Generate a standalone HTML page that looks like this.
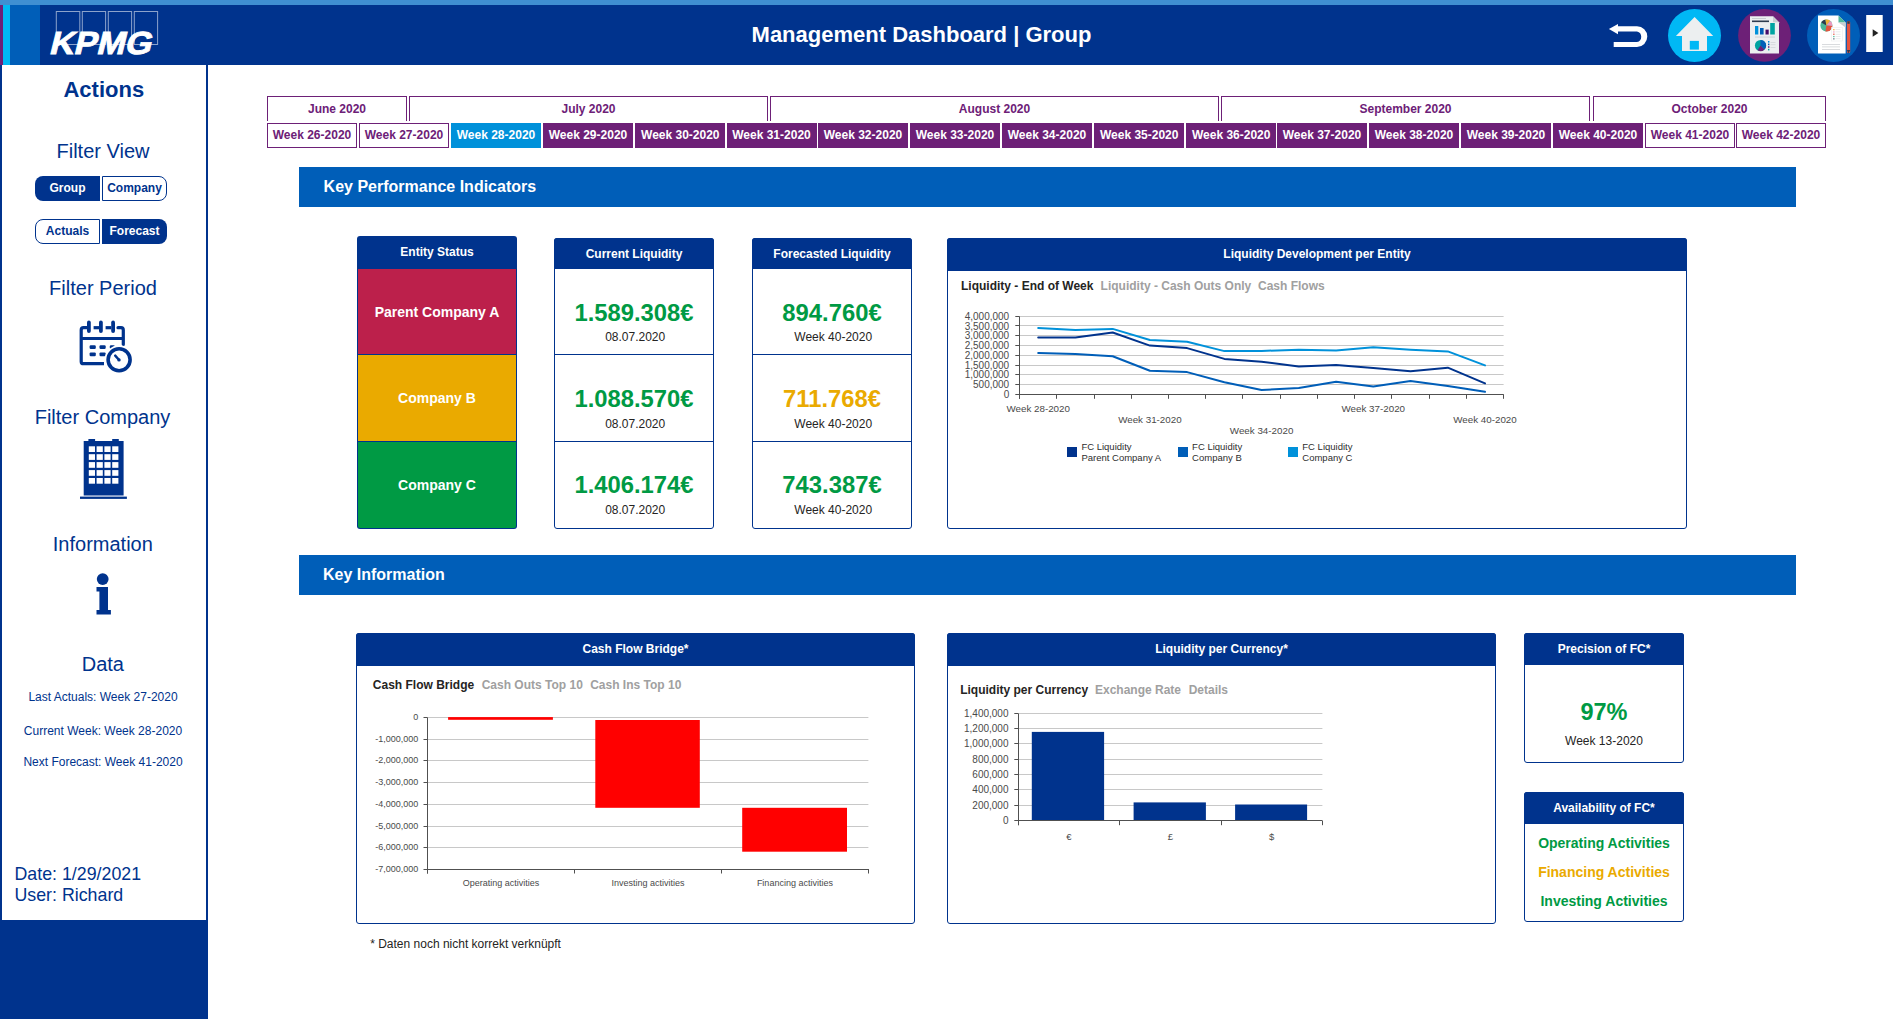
<!DOCTYPE html>
<html><head><meta charset="utf-8"><title>Management Dashboard | Group</title>
<style>
html,body{margin:0;padding:0;}
body{width:1893px;height:1019px;overflow:hidden;position:relative;background:#fff;font-family:"Liberation Sans", sans-serif;}
.a{position:absolute;}
.t{position:absolute;white-space:nowrap;}
svg{position:absolute;}
</style></head><body>
<div class="a" style="left:0px;top:0px;width:1893px;height:5px;background:#3F8FD2;"></div>
<div class="a" style="left:0px;top:5px;width:1893px;height:60px;background:#00338D;"></div>
<div class="a" style="left:0px;top:5px;width:3px;height:60px;background:#6D2077;"></div>
<div class="a" style="left:3px;top:5px;width:7px;height:60px;background:#00B8F5;"></div>
<div class="a" style="left:10px;top:5px;width:30px;height:60px;background:#005EB8;"></div>
<svg style="left:40px;top:5px" width="130" height="60" viewBox="40 5 130 60"><g fill="none" stroke="rgba(255,255,255,0.55)" stroke-width="1"><rect x="56.3" y="11.5" width="23.5" height="33"/><rect x="82.3" y="11.5" width="23.3" height="33"/><rect x="108.3" y="11.5" width="23.3" height="33"/><rect x="134.3" y="11.5" width="23.3" height="33"/></g><g transform="translate(0 54.4) skewX(-14) translate(0 -54.4)"><text x="48.5" y="54.4" font-family='"Liberation Sans", sans-serif' font-weight="bold" font-size="32" fill="#fff" stroke="#fff" stroke-width="0.9" textLength="102" lengthAdjust="spacingAndGlyphs">KPMG</text></g></svg>
<div class="t" style="top:23.68px;font-size:22px;line-height:22px;color:#fff;font-weight:bold;left:521.5px;width:800px;text-align:center;">Management Dashboard | Group</div>
<svg style="left:1600px;top:5px" width="293" height="60" viewBox="1600 5 293 60"><path d="M1618 26.3 H1637 A10.3 10.3 0 0 1 1637 46.9 H1613.7 V42.1 H1637 A5.5 5.5 0 0 0 1637 31.4 H1618 Z" fill="#fff"/><path d="M1608.9 29 L1618 23.9 L1618 34.2 Z" fill="#fff"/><circle cx="1694.5" cy="35.4" r="26.5" fill="#00B8F5"/><path d="M1694.6 17 L1713.2 35.9 L1707 35.9 L1707 50.9 L1682 50.9 L1682 35.9 L1675.9 35.9 Z" fill="#ECEFF0"/><rect x="1689.8" y="40.9" width="9.1" height="8.7" fill="#00B8F5"/><circle cx="1764.5" cy="35.4" r="26.4" fill="#6D2077"/><path d="M1750 16.3 H1773 L1779 22.3 V53.4 H1750 Z" fill="#ECEEF0"/><path d="M1773 16.3 L1779 22.3 H1773 Z" fill="#C9CDD1"/><rect x="1752" y="20.5" width="17" height="1.6" fill="#2E3B4E"/><rect x="1752" y="18" width="14" height="1" fill="#C9CDD1"/><rect x="1755" y="26" width="3.3" height="8.5" fill="#0091DA"/><rect x="1760" y="28" width="3.6" height="6.5" fill="#005EB8"/><rect x="1765.5" y="29.6" width="3.2" height="4.9" fill="#470A68"/><rect x="1770.2" y="23" width="4.6" height="11.5" fill="#00A3A1"/><rect x="1755" y="36.6" width="20" height="0.9" fill="#C9CDD1"/><circle cx="1760.5" cy="45.5" r="5.6" fill="#00A3A1"/><path d="M1760.5 45.5 V39.9 A5.6 5.6 0 0 1 1764.5 49.4 Z" fill="#005EB8"/><path d="M1760.5 45.5 L1764.5 49.4 A5.6 5.6 0 0 1 1757.5 50.2 Z" fill="#6D2077"/><rect x="1768" y="41" width="1.4" height="1.6" fill="#0091DA"/><rect x="1768" y="43.6" width="1.4" height="1.6" fill="#005EB8"/><rect x="1768" y="46.2" width="1.4" height="1.6" fill="#6D2077"/><rect x="1768" y="48.8" width="1.4" height="1.6" fill="#00A3A1"/><rect x="1770.5" y="42" width="5" height="0.6" fill="#C9CDD1"/><rect x="1770.5" y="44.5" width="5" height="0.6" fill="#C9CDD1"/><rect x="1770.5" y="47" width="5" height="0.6" fill="#C9CDD1"/><circle cx="1833.5" cy="35.4" r="26.5" fill="#005EB8"/><path d="M1818 15.4 H1838.5 L1845.6 22.5 V53.4 H1818 Z" fill="#fff"/><path d="M1838.5 15.4 L1845.6 22.5 H1838.5 Z" fill="#4DB89A"/><path d="M1838.5 22.5 H1845.6 V27.5 Z" fill="#C9CDD1"/><circle cx="1826.4" cy="25.5" r="6" fill="#4DB89A"/><path d="M1826.4 25.5 L1821.2 22.5 A6 6 0 0 1 1825.4 19.6 Z" fill="#2E3B4E"/><path d="M1826.4 25.5 L1825.4 19.6 A6 6 0 0 1 1830.2 20.8 Z" fill="#F2B134"/><path d="M1826.4 25.5 L1830.2 20.8 A6 6 0 0 1 1832.4 25.9 Z" fill="#E99AC1"/><path d="M1826.4 25.5 L1832.4 25.9 A6 6 0 0 1 1825.4 31.4 Z" fill="#E5533F"/><rect x="1831.5" y="27.5" width="11" height="13.5" fill="#fff" stroke="#E6E8EA" stroke-width="0.5"/><rect x="1833.2" y="29" width="1.3" height="1.3" fill="#F2B134"/><rect x="1833.2" y="31.3" width="1.3" height="1.3" fill="#E99AC1"/><rect x="1833.2" y="33.6" width="1.3" height="1.3" fill="#E5533F"/><rect x="1833.2" y="35.9" width="1.3" height="1.3" fill="#4DB89A"/><rect x="1833.2" y="38.2" width="1.3" height="1.3" fill="#5A6B7E"/><g fill="#DADDE0"><rect x="1835.5" y="29.3" width="5" height="0.6"/><rect x="1835.5" y="31.6" width="5" height="0.6"/><rect x="1835.5" y="33.9" width="5" height="0.6"/><rect x="1835.5" y="36.2" width="5" height="0.6"/><rect x="1835.5" y="38.5" width="5" height="0.6"/></g><rect x="1822" y="44" width="18" height="0.8" fill="#D0D3D6"/><rect x="1822" y="46.5" width="18" height="0.8" fill="#D0D3D6"/><rect x="1822" y="49" width="18" height="0.8" fill="#D0D3D6"/><rect x="1846.9" y="21.3" width="3.3" height="31.7" rx="1.3" fill="#E5533F"/><rect x="1847.4" y="21.3" width="2.3" height="2.5" fill="#2E3B4E"/><path d="M1846.9 50 H1850.2 L1848.55 53.5 Z" fill="#2E3B4E"/><rect x="1866.2" y="15" width="16.5" height="37" fill="#fff"/><path d="M1872.7 29.2 L1878.4 33 L1872.7 36.7 Z" fill="#222"/></svg>
<div class="a" style="left:0px;top:65px;width:2px;height:954px;background:#00338D;"></div>
<div class="a" style="left:206px;top:65px;width:2px;height:954px;background:#00338D;"></div>
<div class="a" style="left:0px;top:920px;width:208px;height:99px;background:#00338D;"></div>
<div class="t" style="top:78.98px;font-size:22px;line-height:22px;color:#00338D;font-weight:bold;left:-296.2px;width:800px;text-align:center;">Actions</div>
<div class="t" style="top:141.07px;font-size:20px;line-height:20px;color:#00338D;left:-297px;width:800px;text-align:center;">Filter View</div>
<div class="a" style="left:35px;top:176px;width:65px;height:25px;background:#00338D;border-radius:8px 0 0 8px;"></div>
<div class="a" style="left:102px;top:176px;width:65px;height:25px;border:1px solid #00338D;box-sizing:border-box;border-radius:0 8px 8px 0;"></div>
<div class="t" style="top:181.84px;font-size:12px;line-height:12px;color:#fff;font-weight:bold;left:-332.5px;width:800px;text-align:center;">Group</div>
<div class="t" style="top:181.84px;font-size:12px;line-height:12px;color:#00338D;font-weight:bold;left:-265.5px;width:800px;text-align:center;">Company</div>
<div class="a" style="left:35px;top:219px;width:65px;height:25px;border:1px solid #00338D;box-sizing:border-box;border-radius:8px 0 0 8px;"></div>
<div class="a" style="left:102px;top:219px;width:65px;height:25px;background:#00338D;border-radius:0 8px 8px 0;"></div>
<div class="t" style="top:224.64px;font-size:12px;line-height:12px;color:#00338D;font-weight:bold;left:-332.5px;width:800px;text-align:center;">Actuals</div>
<div class="t" style="top:224.64px;font-size:12px;line-height:12px;color:#fff;font-weight:bold;left:-265.5px;width:800px;text-align:center;">Forecast</div>
<div class="t" style="top:278.07px;font-size:20px;line-height:20px;color:#00338D;left:-297px;width:800px;text-align:center;">Filter Period</div>
<svg style="left:70px;top:310px" width="70" height="70" viewBox="70 310 70 70"><g fill="none" stroke="#00338D" stroke-width="3.2" stroke-linecap="round" stroke-linejoin="round"><path d="M104 363.7 H83.5 A2.3 2.3 0 0 1 81.2 361.4 V330 A2.3 2.3 0 0 1 83.5 327.7 H87" stroke-linecap="butt"/><path d="M93.6 327.7 H99" stroke-linecap="butt"/><path d="M105.6 327.7 H111.2" stroke-linecap="butt"/><path d="M118 327.7 H121 A2.3 2.3 0 0 1 123.3 330 V344.5"/><path d="M82 338.5 H122.5"/></g><g stroke="#00338D" stroke-width="3.8" stroke-linecap="round"><path d="M88.9 322.5 V331"/><path d="M100.9 322.5 V331"/><path d="M113.1 322.5 V331"/></g><g fill="#00338D"><rect x="89.6" y="345.2" width="6.2" height="3.8" rx="1.2"/><rect x="99.5" y="345.2" width="6.2" height="3.8" rx="1.2"/><rect x="109.8" y="345.2" width="5" height="3.8" rx="1.2"/><rect x="89.6" y="352.4" width="6.2" height="3.8" rx="1.2"/><rect x="99.5" y="352.4" width="6.2" height="3.8" rx="1.2"/></g><circle cx="119.1" cy="359.8" r="14.5" fill="#fff"/><circle cx="119.1" cy="359.8" r="11" fill="#fff" stroke="#00338D" stroke-width="3.6"/><path d="M115.2 355.6 L118.9 359.8" stroke="#00338D" stroke-width="2.4" stroke-linecap="round"/><circle cx="119" cy="359.9" r="1.7" fill="#00338D"/></svg>
<div class="t" style="top:407.07px;font-size:20px;line-height:20px;color:#00338D;left:-297.5px;width:800px;text-align:center;">Filter Company</div>
<svg style="left:70px;top:430px" width="70" height="80" viewBox="70 430 70 80"><g fill="#00338D"><rect x="83.7" y="441" width="39.9" height="54.5"/><rect x="88.4" y="439" width="6.7" height="3"/><rect x="112.2" y="439" width="6.6" height="3"/><rect x="80" y="496.6" width="46.9" height="2.3"/></g><g fill="#fff"><rect x="88.8" y="446.3" width="6.2" height="5.7"/><rect x="96.6" y="446.3" width="6.2" height="5.7"/><rect x="104.4" y="446.3" width="6.2" height="5.7"/><rect x="112.2" y="446.3" width="6.2" height="5.7"/><rect x="88.8" y="454.2" width="6.2" height="5.7"/><rect x="96.6" y="454.2" width="6.2" height="5.7"/><rect x="104.4" y="454.2" width="6.2" height="5.7"/><rect x="112.2" y="454.2" width="6.2" height="5.7"/><rect x="88.8" y="462.1" width="6.2" height="5.7"/><rect x="96.6" y="462.1" width="6.2" height="5.7"/><rect x="104.4" y="462.1" width="6.2" height="5.7"/><rect x="112.2" y="462.1" width="6.2" height="5.7"/><rect x="88.8" y="470.1" width="6.2" height="5.7"/><rect x="96.6" y="470.1" width="6.2" height="5.7"/><rect x="104.4" y="470.1" width="6.2" height="5.7"/><rect x="112.2" y="470.1" width="6.2" height="5.7"/><rect x="88.8" y="478.0" width="6.2" height="5.7"/><rect x="96.6" y="478.0" width="6.2" height="5.7"/><rect x="104.4" y="478.0" width="6.2" height="5.7"/><rect x="112.2" y="478.0" width="6.2" height="5.7"/></g></svg>
<div class="t" style="top:534.17px;font-size:20px;line-height:20px;color:#00338D;left:-297.2px;width:800px;text-align:center;">Information</div>
<svg style="left:85px;top:565px" width="40" height="60" viewBox="85 565 40 60"><g fill="#00338D"><circle cx="102.7" cy="579.1" r="5.9"/><path d="M96.5 587.1 H108 V610 H110.9 V614.5 H96.5 V610 H99.4 V591.6 H96.5 Z"/></g></svg>
<div class="t" style="top:653.77px;font-size:20px;line-height:20px;color:#00338D;left:-297.2px;width:800px;text-align:center;">Data</div>
<div class="t" style="top:690.84px;font-size:12px;line-height:12px;color:#00338D;left:-297px;width:800px;text-align:center;">Last Actuals: Week 27-2020</div>
<div class="t" style="top:724.74px;font-size:12px;line-height:12px;color:#00338D;left:-297px;width:800px;text-align:center;">Current Week: Week 28-2020</div>
<div class="t" style="top:755.74px;font-size:12px;line-height:12px;color:#00338D;left:-297px;width:800px;text-align:center;">Next Forecast: Week 41-2020</div>
<div class="t" style="top:865.93px;font-size:17.8px;line-height:17.8px;color:#00338D;left:14.5px;">Date: 1/29/2021</div>
<div class="t" style="top:886.73px;font-size:17.8px;line-height:17.8px;color:#00338D;left:14.5px;">User: Richard</div>
<div class="a" style="left:267px;top:96px;width:140px;height:25px;border:1px solid #6D2077;border-bottom:none;box-sizing:border-box;"></div>
<div class="t" style="top:103.04px;font-size:12px;line-height:12px;color:#6D2077;font-weight:bold;left:-63.0px;width:800px;text-align:center;">June 2020</div>
<div class="a" style="left:409px;top:96px;width:359px;height:25px;border:1px solid #6D2077;border-bottom:none;box-sizing:border-box;"></div>
<div class="t" style="top:103.04px;font-size:12px;line-height:12px;color:#6D2077;font-weight:bold;left:188.5px;width:800px;text-align:center;">July 2020</div>
<div class="a" style="left:770px;top:96px;width:449px;height:25px;border:1px solid #6D2077;border-bottom:none;box-sizing:border-box;"></div>
<div class="t" style="top:103.04px;font-size:12px;line-height:12px;color:#6D2077;font-weight:bold;left:594.5px;width:800px;text-align:center;">August 2020</div>
<div class="a" style="left:1221px;top:96px;width:369px;height:25px;border:1px solid #6D2077;border-bottom:none;box-sizing:border-box;"></div>
<div class="t" style="top:103.04px;font-size:12px;line-height:12px;color:#6D2077;font-weight:bold;left:1005.5px;width:800px;text-align:center;">September 2020</div>
<div class="a" style="left:1593px;top:96px;width:233px;height:25px;border:1px solid #6D2077;border-bottom:none;box-sizing:border-box;"></div>
<div class="t" style="top:103.04px;font-size:12px;line-height:12px;color:#6D2077;font-weight:bold;left:1309.5px;width:800px;text-align:center;">October 2020</div>
<div class="a" style="left:267px;top:123px;width:90px;height:25px;border:1px solid #6D2077;box-sizing:border-box;"></div>
<div class="t" style="top:128.84px;font-size:12px;line-height:12px;color:#6D2077;font-weight:bold;left:-88.0px;width:800px;text-align:center;">Week 26-2020</div>
<div class="a" style="left:359px;top:123px;width:90px;height:25px;border:1px solid #6D2077;box-sizing:border-box;"></div>
<div class="t" style="top:128.84px;font-size:12px;line-height:12px;color:#6D2077;font-weight:bold;left:4.0px;width:800px;text-align:center;">Week 27-2020</div>
<div class="a" style="left:451px;top:123px;width:90px;height:25px;background:#0091DA;"></div>
<div class="t" style="top:128.84px;font-size:12px;line-height:12px;color:#fff;font-weight:bold;left:96.0px;width:800px;text-align:center;">Week 28-2020</div>
<div class="a" style="left:543px;top:123px;width:90px;height:25px;background:#6D2077;"></div>
<div class="t" style="top:128.84px;font-size:12px;line-height:12px;color:#fff;font-weight:bold;left:188.0px;width:800px;text-align:center;">Week 29-2020</div>
<div class="a" style="left:635.3px;top:123px;width:90px;height:25px;background:#6D2077;"></div>
<div class="t" style="top:128.84px;font-size:12px;line-height:12px;color:#fff;font-weight:bold;left:280.29999999999995px;width:800px;text-align:center;">Week 30-2020</div>
<div class="a" style="left:726.5px;top:123px;width:90px;height:25px;background:#6D2077;"></div>
<div class="t" style="top:128.84px;font-size:12px;line-height:12px;color:#fff;font-weight:bold;left:371.5px;width:800px;text-align:center;">Week 31-2020</div>
<div class="a" style="left:818px;top:123px;width:90px;height:25px;background:#6D2077;"></div>
<div class="t" style="top:128.84px;font-size:12px;line-height:12px;color:#fff;font-weight:bold;left:463.0px;width:800px;text-align:center;">Week 32-2020</div>
<div class="a" style="left:910px;top:123px;width:90px;height:25px;background:#6D2077;"></div>
<div class="t" style="top:128.84px;font-size:12px;line-height:12px;color:#fff;font-weight:bold;left:555.0px;width:800px;text-align:center;">Week 33-2020</div>
<div class="a" style="left:1002px;top:123px;width:90px;height:25px;background:#6D2077;"></div>
<div class="t" style="top:128.84px;font-size:12px;line-height:12px;color:#fff;font-weight:bold;left:647.0px;width:800px;text-align:center;">Week 34-2020</div>
<div class="a" style="left:1094.2px;top:123px;width:90px;height:25px;background:#6D2077;"></div>
<div class="t" style="top:128.84px;font-size:12px;line-height:12px;color:#fff;font-weight:bold;left:739.2px;width:800px;text-align:center;">Week 35-2020</div>
<div class="a" style="left:1186.2px;top:123px;width:90px;height:25px;background:#6D2077;"></div>
<div class="t" style="top:128.84px;font-size:12px;line-height:12px;color:#fff;font-weight:bold;left:831.2px;width:800px;text-align:center;">Week 36-2020</div>
<div class="a" style="left:1277px;top:123px;width:90px;height:25px;background:#6D2077;"></div>
<div class="t" style="top:128.84px;font-size:12px;line-height:12px;color:#fff;font-weight:bold;left:922.0px;width:800px;text-align:center;">Week 37-2020</div>
<div class="a" style="left:1369px;top:123px;width:90px;height:25px;background:#6D2077;"></div>
<div class="t" style="top:128.84px;font-size:12px;line-height:12px;color:#fff;font-weight:bold;left:1014.0px;width:800px;text-align:center;">Week 38-2020</div>
<div class="a" style="left:1461px;top:123px;width:90px;height:25px;background:#6D2077;"></div>
<div class="t" style="top:128.84px;font-size:12px;line-height:12px;color:#fff;font-weight:bold;left:1106.0px;width:800px;text-align:center;">Week 39-2020</div>
<div class="a" style="left:1553px;top:123px;width:90px;height:25px;background:#6D2077;"></div>
<div class="t" style="top:128.84px;font-size:12px;line-height:12px;color:#fff;font-weight:bold;left:1198.0px;width:800px;text-align:center;">Week 40-2020</div>
<div class="a" style="left:1645px;top:123px;width:90px;height:25px;border:1px solid #6D2077;box-sizing:border-box;"></div>
<div class="t" style="top:128.84px;font-size:12px;line-height:12px;color:#6D2077;font-weight:bold;left:1290.0px;width:800px;text-align:center;">Week 41-2020</div>
<div class="a" style="left:1736px;top:123px;width:90px;height:25px;border:1px solid #6D2077;box-sizing:border-box;"></div>
<div class="t" style="top:128.84px;font-size:12px;line-height:12px;color:#6D2077;font-weight:bold;left:1381.0px;width:800px;text-align:center;">Week 42-2020</div>
<div class="a" style="left:299px;top:167px;width:1497px;height:40px;background:#005EB8;"></div>
<div class="t" style="top:178.96px;font-size:16px;line-height:16px;color:#fff;font-weight:bold;left:323.6px;">Key Performance Indicators</div>
<div class="a" style="left:299px;top:555px;width:1497px;height:40px;background:#005EB8;"></div>
<div class="t" style="top:567.46px;font-size:16px;line-height:16px;color:#fff;font-weight:bold;left:323px;">Key Information</div>
<div class="a" style="left:357px;top:236px;width:160px;height:293px;background:#00338D;border-radius:3px;"></div>
<div class="a" style="left:358px;top:269px;width:158px;height:85px;background:#BC204B;"></div>
<div class="a" style="left:358px;top:355px;width:158px;height:86px;background:#EAAA00;"></div>
<div class="a" style="left:358px;top:442px;width:158px;height:86px;background:#009A44;border-radius:0 0 2px 2px;"></div>
<div class="t" style="top:246.04px;font-size:12px;line-height:12px;color:#fff;font-weight:bold;left:37px;width:800px;text-align:center;">Entity Status</div>
<div class="t" style="top:304.95px;font-size:14px;line-height:14px;color:#fff;font-weight:bold;left:37px;width:800px;text-align:center;">Parent Company A</div>
<div class="t" style="top:390.95px;font-size:14px;line-height:14px;color:#fff;font-weight:bold;left:37px;width:800px;text-align:center;">Company B</div>
<div class="t" style="top:478.25px;font-size:14px;line-height:14px;color:#fff;font-weight:bold;left:37px;width:800px;text-align:center;">Company C</div>
<div class="a" style="left:554px;top:238px;width:160px;height:291px;border:1px solid #00338D;box-sizing:border-box;border-radius:3px;"></div>
<div class="a" style="left:554px;top:238px;width:160px;height:31px;background:#00338D;border-radius:3px 3px 0 0;"></div>
<div class="a" style="left:554px;top:354px;width:160px;height:1px;background:#00338D;"></div>
<div class="a" style="left:554px;top:440.5px;width:160px;height:1px;background:#00338D;"></div>
<div class="t" style="top:248.34px;font-size:12px;line-height:12px;color:#fff;font-weight:bold;left:234.0px;width:800px;text-align:center;">Current Liquidity</div>
<div class="t" style="top:300.75px;font-size:23.8px;line-height:23.8px;color:#009A44;font-weight:bold;left:234.0px;width:800px;text-align:center;">1.589.308€</div>
<div class="t" style="top:330.84px;font-size:12px;line-height:12px;color:#252423;left:235.20000000000005px;width:800px;text-align:center;">08.07.2020</div>
<div class="t" style="top:386.75px;font-size:23.8px;line-height:23.8px;color:#009A44;font-weight:bold;left:234.0px;width:800px;text-align:center;">1.088.570€</div>
<div class="t" style="top:417.64px;font-size:12px;line-height:12px;color:#252423;left:235.20000000000005px;width:800px;text-align:center;">08.07.2020</div>
<div class="t" style="top:473.05px;font-size:23.8px;line-height:23.8px;color:#009A44;font-weight:bold;left:234.0px;width:800px;text-align:center;">1.406.174€</div>
<div class="t" style="top:503.84px;font-size:12px;line-height:12px;color:#252423;left:235.20000000000005px;width:800px;text-align:center;">08.07.2020</div>
<div class="a" style="left:752px;top:238px;width:160px;height:291px;border:1px solid #00338D;box-sizing:border-box;border-radius:3px;"></div>
<div class="a" style="left:752px;top:238px;width:160px;height:31px;background:#00338D;border-radius:3px 3px 0 0;"></div>
<div class="a" style="left:752px;top:354px;width:160px;height:1px;background:#00338D;"></div>
<div class="a" style="left:752px;top:440.5px;width:160px;height:1px;background:#00338D;"></div>
<div class="t" style="top:248.34px;font-size:12px;line-height:12px;color:#fff;font-weight:bold;left:432.0px;width:800px;text-align:center;">Forecasted Liquidity</div>
<div class="t" style="top:300.75px;font-size:23.8px;line-height:23.8px;color:#009A44;font-weight:bold;left:432.0px;width:800px;text-align:center;">894.760€</div>
<div class="t" style="top:330.84px;font-size:12px;line-height:12px;color:#252423;left:433.20000000000005px;width:800px;text-align:center;">Week 40-2020</div>
<div class="t" style="top:386.75px;font-size:23.8px;line-height:23.8px;color:#EAAA00;font-weight:bold;left:432.0px;width:800px;text-align:center;">711.768€</div>
<div class="t" style="top:417.64px;font-size:12px;line-height:12px;color:#252423;left:433.20000000000005px;width:800px;text-align:center;">Week 40-2020</div>
<div class="t" style="top:473.05px;font-size:23.8px;line-height:23.8px;color:#009A44;font-weight:bold;left:432.0px;width:800px;text-align:center;">743.387€</div>
<div class="t" style="top:503.84px;font-size:12px;line-height:12px;color:#252423;left:433.20000000000005px;width:800px;text-align:center;">Week 40-2020</div>
<div class="a" style="left:947px;top:238px;width:740px;height:291px;border:1px solid #00338D;box-sizing:border-box;border-radius:3px;"></div>
<div class="a" style="left:947px;top:238px;width:740px;height:32.5px;background:#00338D;border-radius:3px 3px 0 0;"></div>
<div class="t" style="top:247.74px;font-size:12px;line-height:12px;color:#fff;font-weight:bold;left:917.0px;width:800px;text-align:center;">Liquidity Development per Entity</div>
<div class="t" style="top:280.14px;font-size:12px;line-height:12px;color:#252423;font-weight:bold;left:961px;">Liquidity - End of Week</div>
<div class="t" style="top:280.14px;font-size:12px;line-height:12px;color:#A0A0A0;font-weight:bold;left:1100.6px;">Liquidity - Cash Outs Only</div>
<div class="t" style="top:280.14px;font-size:12px;line-height:12px;color:#A0A0A0;font-weight:bold;left:1258px;">Cash Flows</div>
<svg style="left:0;top:0" width="1893" height="1019" viewBox="0 0 1893 1019"><line x1="1019.6" y1="384.5" x2="1503.6" y2="384.5" stroke="#C8C8C8" stroke-width="1"/><line x1="1019.6" y1="374.5" x2="1503.6" y2="374.5" stroke="#C8C8C8" stroke-width="1"/><line x1="1019.6" y1="365.5" x2="1503.6" y2="365.5" stroke="#C8C8C8" stroke-width="1"/><line x1="1019.6" y1="355.5" x2="1503.6" y2="355.5" stroke="#C8C8C8" stroke-width="1"/><line x1="1019.6" y1="345.5" x2="1503.6" y2="345.5" stroke="#C8C8C8" stroke-width="1"/><line x1="1019.6" y1="335.5" x2="1503.6" y2="335.5" stroke="#C8C8C8" stroke-width="1"/><line x1="1019.6" y1="325.5" x2="1503.6" y2="325.5" stroke="#C8C8C8" stroke-width="1"/><line x1="1019.6" y1="316.5" x2="1503.6" y2="316.5" stroke="#C8C8C8" stroke-width="1"/><line x1="1015.3000000000001" y1="394.5" x2="1019.6" y2="394.5" stroke="#505050" stroke-width="1"/><line x1="1015.3000000000001" y1="384.5" x2="1019.6" y2="384.5" stroke="#505050" stroke-width="1"/><line x1="1015.3000000000001" y1="374.5" x2="1019.6" y2="374.5" stroke="#505050" stroke-width="1"/><line x1="1015.3000000000001" y1="365.5" x2="1019.6" y2="365.5" stroke="#505050" stroke-width="1"/><line x1="1015.3000000000001" y1="355.5" x2="1019.6" y2="355.5" stroke="#505050" stroke-width="1"/><line x1="1015.3000000000001" y1="345.5" x2="1019.6" y2="345.5" stroke="#505050" stroke-width="1"/><line x1="1015.3000000000001" y1="335.5" x2="1019.6" y2="335.5" stroke="#505050" stroke-width="1"/><line x1="1015.3000000000001" y1="325.5" x2="1019.6" y2="325.5" stroke="#505050" stroke-width="1"/><line x1="1015.3000000000001" y1="316.5" x2="1019.6" y2="316.5" stroke="#505050" stroke-width="1"/><line x1="1019.5" y1="394.3" x2="1019.5" y2="398.8" stroke="#505050" stroke-width="1"/><line x1="1056.5" y1="394.3" x2="1056.5" y2="398.8" stroke="#505050" stroke-width="1"/><line x1="1094.5" y1="394.3" x2="1094.5" y2="398.8" stroke="#505050" stroke-width="1"/><line x1="1131.5" y1="394.3" x2="1131.5" y2="398.8" stroke="#505050" stroke-width="1"/><line x1="1168.5" y1="394.3" x2="1168.5" y2="398.8" stroke="#505050" stroke-width="1"/><line x1="1205.5" y1="394.3" x2="1205.5" y2="398.8" stroke="#505050" stroke-width="1"/><line x1="1242.5" y1="394.3" x2="1242.5" y2="398.8" stroke="#505050" stroke-width="1"/><line x1="1280.5" y1="394.3" x2="1280.5" y2="398.8" stroke="#505050" stroke-width="1"/><line x1="1317.5" y1="394.3" x2="1317.5" y2="398.8" stroke="#505050" stroke-width="1"/><line x1="1354.5" y1="394.3" x2="1354.5" y2="398.8" stroke="#505050" stroke-width="1"/><line x1="1391.5" y1="394.3" x2="1391.5" y2="398.8" stroke="#505050" stroke-width="1"/><line x1="1429.5" y1="394.3" x2="1429.5" y2="398.8" stroke="#505050" stroke-width="1"/><line x1="1466.5" y1="394.3" x2="1466.5" y2="398.8" stroke="#505050" stroke-width="1"/><line x1="1503.5" y1="394.3" x2="1503.5" y2="398.8" stroke="#505050" stroke-width="1"/><line x1="1019.5" y1="316.5" x2="1019.5" y2="398.8" stroke="#505050" stroke-width="1"/><line x1="1019.6" y1="394.5" x2="1503.6" y2="394.5" stroke="#505050" stroke-width="1"/><polyline points="1038.2,328.0 1075.4,330.0 1112.7,328.9 1149.9,340.0 1187.1,341.7 1224.4,351.1 1261.6,350.9 1298.8,349.7 1336.1,350.6 1373.3,347.2 1410.5,349.7 1447.8,351.4 1485.0,365.4" fill="none" stroke="#0091DA" stroke-width="2" stroke-linejoin="round" stroke-linecap="round"/><polyline points="1038.2,337.5 1075.4,337.5 1112.7,332.5 1149.9,345.6 1187.1,348.1 1224.4,358.9 1261.6,361.7 1298.8,366.4 1336.1,365.1 1373.3,368.1 1410.5,371.2 1447.8,367.7 1485.0,383.4" fill="none" stroke="#00338D" stroke-width="2" stroke-linejoin="round" stroke-linecap="round"/><polyline points="1038.2,353.1 1075.4,353.9 1112.7,356.2 1149.9,370.7 1187.1,372.1 1224.4,382.3 1261.6,390.1 1298.8,387.9 1336.1,381.8 1373.3,386.4 1410.5,380.9 1447.8,385.9 1485.0,391.8" fill="none" stroke="#005EB8" stroke-width="2" stroke-linejoin="round" stroke-linecap="round"/></svg>
<div class="t" style="top:389.94px;font-size:10px;line-height:10px;color:#4A4A4A;left:209.20000000000005px;width:800px;text-align:right;">0</div>
<div class="t" style="top:380.18px;font-size:10px;line-height:10px;color:#4A4A4A;left:209.20000000000005px;width:800px;text-align:right;">500,000</div>
<div class="t" style="top:370.42px;font-size:10px;line-height:10px;color:#4A4A4A;left:209.20000000000005px;width:800px;text-align:right;">1,000,000</div>
<div class="t" style="top:360.66px;font-size:10px;line-height:10px;color:#4A4A4A;left:209.20000000000005px;width:800px;text-align:right;">1,500,000</div>
<div class="t" style="top:350.90px;font-size:10px;line-height:10px;color:#4A4A4A;left:209.20000000000005px;width:800px;text-align:right;">2,000,000</div>
<div class="t" style="top:341.14px;font-size:10px;line-height:10px;color:#4A4A4A;left:209.20000000000005px;width:800px;text-align:right;">2,500,000</div>
<div class="t" style="top:331.38px;font-size:10px;line-height:10px;color:#4A4A4A;left:209.20000000000005px;width:800px;text-align:right;">3,000,000</div>
<div class="t" style="top:321.62px;font-size:10px;line-height:10px;color:#4A4A4A;left:209.20000000000005px;width:800px;text-align:right;">3,500,000</div>
<div class="t" style="top:311.86px;font-size:10px;line-height:10px;color:#4A4A4A;left:209.20000000000005px;width:800px;text-align:right;">4,000,000</div>
<div class="t" style="top:403.50px;font-size:9.8px;line-height:9.8px;color:#4A4A4A;left:638.2153846153847px;width:800px;text-align:center;">Week 28-2020</div>
<div class="t" style="top:415.10px;font-size:9.8px;line-height:9.8px;color:#4A4A4A;left:749.9076923076923px;width:800px;text-align:center;">Week 31-2020</div>
<div class="t" style="top:426.10px;font-size:9.8px;line-height:9.8px;color:#4A4A4A;left:861.5999999999999px;width:800px;text-align:center;">Week 34-2020</div>
<div class="t" style="top:403.50px;font-size:9.8px;line-height:9.8px;color:#4A4A4A;left:973.2923076923075px;width:800px;text-align:center;">Week 37-2020</div>
<div class="t" style="top:415.10px;font-size:9.8px;line-height:9.8px;color:#4A4A4A;left:1084.9846153846152px;width:800px;text-align:center;">Week 40-2020</div>
<div class="a" style="left:1067.1px;top:447px;width:10px;height:10px;background:#00338D;"></div>
<div class="t" style="top:442.16px;font-size:9.5px;line-height:9.5px;color:#2E2E2E;left:1081.3999999999999px;">FC Liquidity</div>
<div class="t" style="top:453.16px;font-size:9.5px;line-height:9.5px;color:#2E2E2E;left:1081.3999999999999px;">Parent Company A</div>
<div class="a" style="left:1177.8px;top:447px;width:10px;height:10px;background:#005EB8;"></div>
<div class="t" style="top:442.16px;font-size:9.5px;line-height:9.5px;color:#2E2E2E;left:1192.1px;">FC Liquidity</div>
<div class="t" style="top:453.16px;font-size:9.5px;line-height:9.5px;color:#2E2E2E;left:1192.1px;">Company B</div>
<div class="a" style="left:1288px;top:447px;width:10px;height:10px;background:#0091DA;"></div>
<div class="t" style="top:442.16px;font-size:9.5px;line-height:9.5px;color:#2E2E2E;left:1302.3px;">FC Liquidity</div>
<div class="t" style="top:453.16px;font-size:9.5px;line-height:9.5px;color:#2E2E2E;left:1302.3px;">Company C</div>
<div class="a" style="left:356px;top:633px;width:559px;height:291px;border:1px solid #00338D;box-sizing:border-box;border-radius:3px;"></div>
<div class="a" style="left:356px;top:633px;width:559px;height:33px;background:#00338D;border-radius:3px 3px 0 0;"></div>
<div class="t" style="top:642.84px;font-size:12px;line-height:12px;color:#fff;font-weight:bold;left:235.5px;width:800px;text-align:center;">Cash Flow Bridge*</div>
<div class="t" style="top:678.54px;font-size:12px;line-height:12px;color:#252423;font-weight:bold;left:372.8px;">Cash Flow Bridge</div>
<div class="t" style="top:678.54px;font-size:12px;line-height:12px;color:#A0A0A0;font-weight:bold;left:481.7px;">Cash Outs Top 10</div>
<div class="t" style="top:678.54px;font-size:12px;line-height:12px;color:#A0A0A0;font-weight:bold;left:590.2px;">Cash Ins Top 10</div>
<svg style="left:0;top:0" width="1893" height="1019" viewBox="0 0 1893 1019"><line x1="427.5" y1="717.5" x2="868.4" y2="717.5" stroke="#C8C8C8" stroke-width="1"/><line x1="427.5" y1="739.5" x2="868.4" y2="739.5" stroke="#C8C8C8" stroke-width="1"/><line x1="427.5" y1="760.5" x2="868.4" y2="760.5" stroke="#C8C8C8" stroke-width="1"/><line x1="427.5" y1="782.5" x2="868.4" y2="782.5" stroke="#C8C8C8" stroke-width="1"/><line x1="427.5" y1="804.5" x2="868.4" y2="804.5" stroke="#C8C8C8" stroke-width="1"/><line x1="427.5" y1="826.5" x2="868.4" y2="826.5" stroke="#C8C8C8" stroke-width="1"/><line x1="427.5" y1="847.5" x2="868.4" y2="847.5" stroke="#C8C8C8" stroke-width="1"/><line x1="423.5" y1="717.5" x2="427.5" y2="717.5" stroke="#505050" stroke-width="1"/><line x1="423.5" y1="739.5" x2="427.5" y2="739.5" stroke="#505050" stroke-width="1"/><line x1="423.5" y1="760.5" x2="427.5" y2="760.5" stroke="#505050" stroke-width="1"/><line x1="423.5" y1="782.5" x2="427.5" y2="782.5" stroke="#505050" stroke-width="1"/><line x1="423.5" y1="804.5" x2="427.5" y2="804.5" stroke="#505050" stroke-width="1"/><line x1="423.5" y1="826.5" x2="427.5" y2="826.5" stroke="#505050" stroke-width="1"/><line x1="423.5" y1="847.5" x2="427.5" y2="847.5" stroke="#505050" stroke-width="1"/><line x1="423.5" y1="869.5" x2="427.5" y2="869.5" stroke="#505050" stroke-width="1"/><line x1="427.5" y1="869.0" x2="427.5" y2="873.5" stroke="#505050" stroke-width="1"/><line x1="574.5" y1="869.0" x2="574.5" y2="873.5" stroke="#505050" stroke-width="1"/><line x1="721.5" y1="869.0" x2="721.5" y2="873.5" stroke="#505050" stroke-width="1"/><line x1="868.5" y1="869.0" x2="868.5" y2="873.5" stroke="#505050" stroke-width="1"/><line x1="427.5" y1="717.5" x2="427.5" y2="873.5" stroke="#505050" stroke-width="1"/><line x1="427.5" y1="869.5" x2="868.4" y2="869.5" stroke="#505050" stroke-width="1"/><rect x="448.1" y="717.1" width="104.8" height="2.7" fill="#FF0000"/><rect x="595.3" y="720" width="104.5" height="87.8" fill="#FF0000"/><rect x="742.2" y="807.8" width="104.8" height="43.9" fill="#FF0000"/></svg>
<div class="t" style="top:713.48px;font-size:9px;line-height:9px;color:#4A4A4A;left:-381.7px;width:800px;text-align:right;">0</div>
<div class="t" style="top:735.48px;font-size:9px;line-height:9px;color:#4A4A4A;left:-381.7px;width:800px;text-align:right;">-1,000,000</div>
<div class="t" style="top:756.48px;font-size:9px;line-height:9px;color:#4A4A4A;left:-381.7px;width:800px;text-align:right;">-2,000,000</div>
<div class="t" style="top:778.48px;font-size:9px;line-height:9px;color:#4A4A4A;left:-381.7px;width:800px;text-align:right;">-3,000,000</div>
<div class="t" style="top:800.48px;font-size:9px;line-height:9px;color:#4A4A4A;left:-381.7px;width:800px;text-align:right;">-4,000,000</div>
<div class="t" style="top:822.48px;font-size:9px;line-height:9px;color:#4A4A4A;left:-381.7px;width:800px;text-align:right;">-5,000,000</div>
<div class="t" style="top:843.48px;font-size:9px;line-height:9px;color:#4A4A4A;left:-381.7px;width:800px;text-align:right;">-6,000,000</div>
<div class="t" style="top:865.48px;font-size:9px;line-height:9px;color:#4A4A4A;left:-381.7px;width:800px;text-align:right;">-7,000,000</div>
<div class="t" style="top:879.38px;font-size:9px;line-height:9px;color:#4A4A4A;left:100.98333333333335px;width:800px;text-align:center;">Operating activities</div>
<div class="t" style="top:879.38px;font-size:9px;line-height:9px;color:#4A4A4A;left:247.94999999999993px;width:800px;text-align:center;">Investing activities</div>
<div class="t" style="top:879.38px;font-size:9px;line-height:9px;color:#4A4A4A;left:394.91666666666674px;width:800px;text-align:center;">Financing activities</div>
<div class="a" style="left:947px;top:633px;width:549px;height:291px;border:1px solid #00338D;box-sizing:border-box;border-radius:3px;"></div>
<div class="a" style="left:947px;top:633px;width:549px;height:33px;background:#00338D;border-radius:3px 3px 0 0;"></div>
<div class="t" style="top:643.44px;font-size:12px;line-height:12px;color:#fff;font-weight:bold;left:821.5px;width:800px;text-align:center;">Liquidity per Currency*</div>
<div class="t" style="top:684.14px;font-size:12px;line-height:12px;color:#252423;font-weight:bold;left:960.2px;">Liquidity per Currency</div>
<div class="t" style="top:684.14px;font-size:12px;line-height:12px;color:#A0A0A0;font-weight:bold;left:1095px;">Exchange Rate</div>
<div class="t" style="top:684.14px;font-size:12px;line-height:12px;color:#A0A0A0;font-weight:bold;left:1188.7px;">Details</div>
<svg style="left:0;top:0" width="1893" height="1019" viewBox="0 0 1893 1019"><line x1="1018.3" y1="713.5" x2="1322.4" y2="713.5" stroke="#C8C8C8" stroke-width="1"/><line x1="1018.3" y1="728.5" x2="1322.4" y2="728.5" stroke="#C8C8C8" stroke-width="1"/><line x1="1018.3" y1="743.5" x2="1322.4" y2="743.5" stroke="#C8C8C8" stroke-width="1"/><line x1="1018.3" y1="759.5" x2="1322.4" y2="759.5" stroke="#C8C8C8" stroke-width="1"/><line x1="1018.3" y1="774.5" x2="1322.4" y2="774.5" stroke="#C8C8C8" stroke-width="1"/><line x1="1018.3" y1="789.5" x2="1322.4" y2="789.5" stroke="#C8C8C8" stroke-width="1"/><line x1="1018.3" y1="805.5" x2="1322.4" y2="805.5" stroke="#C8C8C8" stroke-width="1"/><line x1="1014.3" y1="713.5" x2="1018.3" y2="713.5" stroke="#505050" stroke-width="1"/><line x1="1014.3" y1="728.5" x2="1018.3" y2="728.5" stroke="#505050" stroke-width="1"/><line x1="1014.3" y1="743.5" x2="1018.3" y2="743.5" stroke="#505050" stroke-width="1"/><line x1="1014.3" y1="759.5" x2="1018.3" y2="759.5" stroke="#505050" stroke-width="1"/><line x1="1014.3" y1="774.5" x2="1018.3" y2="774.5" stroke="#505050" stroke-width="1"/><line x1="1014.3" y1="789.5" x2="1018.3" y2="789.5" stroke="#505050" stroke-width="1"/><line x1="1014.3" y1="805.5" x2="1018.3" y2="805.5" stroke="#505050" stroke-width="1"/><line x1="1014.3" y1="820.5" x2="1018.3" y2="820.5" stroke="#505050" stroke-width="1"/><line x1="1018.5" y1="820.7" x2="1018.5" y2="825.2" stroke="#505050" stroke-width="1"/><line x1="1119.5" y1="820.7" x2="1119.5" y2="825.2" stroke="#505050" stroke-width="1"/><line x1="1221.5" y1="820.7" x2="1221.5" y2="825.2" stroke="#505050" stroke-width="1"/><line x1="1322.5" y1="820.7" x2="1322.5" y2="825.2" stroke="#505050" stroke-width="1"/><line x1="1018.5" y1="713.5" x2="1018.5" y2="825.2" stroke="#505050" stroke-width="1"/><rect x="1031.8" y="731.9" width="72.3" height="88.8" fill="#00338D"/><rect x="1133.6" y="802.4" width="72.3" height="18.3" fill="#00338D"/><rect x="1235.1" y="804.5" width="72" height="16.2" fill="#00338D"/><line x1="1018.3" y1="820.5" x2="1322.4" y2="820.5" stroke="#505050" stroke-width="1"/></svg>
<div class="t" style="top:708.93px;font-size:10px;line-height:10px;color:#4A4A4A;left:208.5px;width:800px;text-align:right;">1,400,000</div>
<div class="t" style="top:723.93px;font-size:10px;line-height:10px;color:#4A4A4A;left:208.5px;width:800px;text-align:right;">1,200,000</div>
<div class="t" style="top:738.93px;font-size:10px;line-height:10px;color:#4A4A4A;left:208.5px;width:800px;text-align:right;">1,000,000</div>
<div class="t" style="top:754.93px;font-size:10px;line-height:10px;color:#4A4A4A;left:208.5px;width:800px;text-align:right;">800,000</div>
<div class="t" style="top:769.93px;font-size:10px;line-height:10px;color:#4A4A4A;left:208.5px;width:800px;text-align:right;">600,000</div>
<div class="t" style="top:784.93px;font-size:10px;line-height:10px;color:#4A4A4A;left:208.5px;width:800px;text-align:right;">400,000</div>
<div class="t" style="top:800.93px;font-size:10px;line-height:10px;color:#4A4A4A;left:208.5px;width:800px;text-align:right;">200,000</div>
<div class="t" style="top:815.93px;font-size:10px;line-height:10px;color:#4A4A4A;left:208.5px;width:800px;text-align:right;">0</div>
<div class="t" style="top:831.56px;font-size:9.5px;line-height:9.5px;color:#4A4A4A;left:668.9833333333333px;width:800px;text-align:center;">€</div>
<div class="t" style="top:831.56px;font-size:9.5px;line-height:9.5px;color:#4A4A4A;left:770.3499999999999px;width:800px;text-align:center;">£</div>
<div class="t" style="top:831.56px;font-size:9.5px;line-height:9.5px;color:#4A4A4A;left:871.7166666666667px;width:800px;text-align:center;">$</div>
<div class="a" style="left:1524px;top:633px;width:160px;height:130px;border:1px solid #00338D;box-sizing:border-box;border-radius:3px;"></div>
<div class="a" style="left:1524px;top:633px;width:160px;height:32.39999999999998px;background:#00338D;border-radius:3px 3px 0 0;"></div>
<div class="t" style="top:643.24px;font-size:12px;line-height:12px;color:#fff;font-weight:bold;left:1204.0px;width:800px;text-align:center;">Precision of FC*</div>
<div class="t" style="top:701.31px;font-size:23.5px;line-height:23.5px;color:#009A44;font-weight:bold;left:1204px;width:800px;text-align:center;">97%</div>
<div class="t" style="top:734.54px;font-size:12px;line-height:12px;color:#252423;left:1204px;width:800px;text-align:center;">Week 13-2020</div>
<div class="a" style="left:1524px;top:792px;width:160px;height:129.5px;border:1px solid #00338D;box-sizing:border-box;border-radius:3px;"></div>
<div class="a" style="left:1524px;top:792px;width:160px;height:32px;background:#00338D;border-radius:3px 3px 0 0;"></div>
<div class="t" style="top:801.84px;font-size:12px;line-height:12px;color:#fff;font-weight:bold;left:1204.0px;width:800px;text-align:center;">Availability of FC*</div>
<div class="t" style="top:836.15px;font-size:14px;line-height:14px;color:#009A44;font-weight:bold;left:1204px;width:800px;text-align:center;">Operating Activities</div>
<div class="t" style="top:865.15px;font-size:14px;line-height:14px;color:#EAAA00;font-weight:bold;left:1204px;width:800px;text-align:center;">Financing Activities</div>
<div class="t" style="top:893.95px;font-size:14px;line-height:14px;color:#009A44;font-weight:bold;left:1204px;width:800px;text-align:center;">Investing Activities</div>
<div class="t" style="top:938.44px;font-size:12px;line-height:12px;color:#252423;left:370.2px;">* Daten noch nicht korrekt verknüpft</div>
</body></html>
